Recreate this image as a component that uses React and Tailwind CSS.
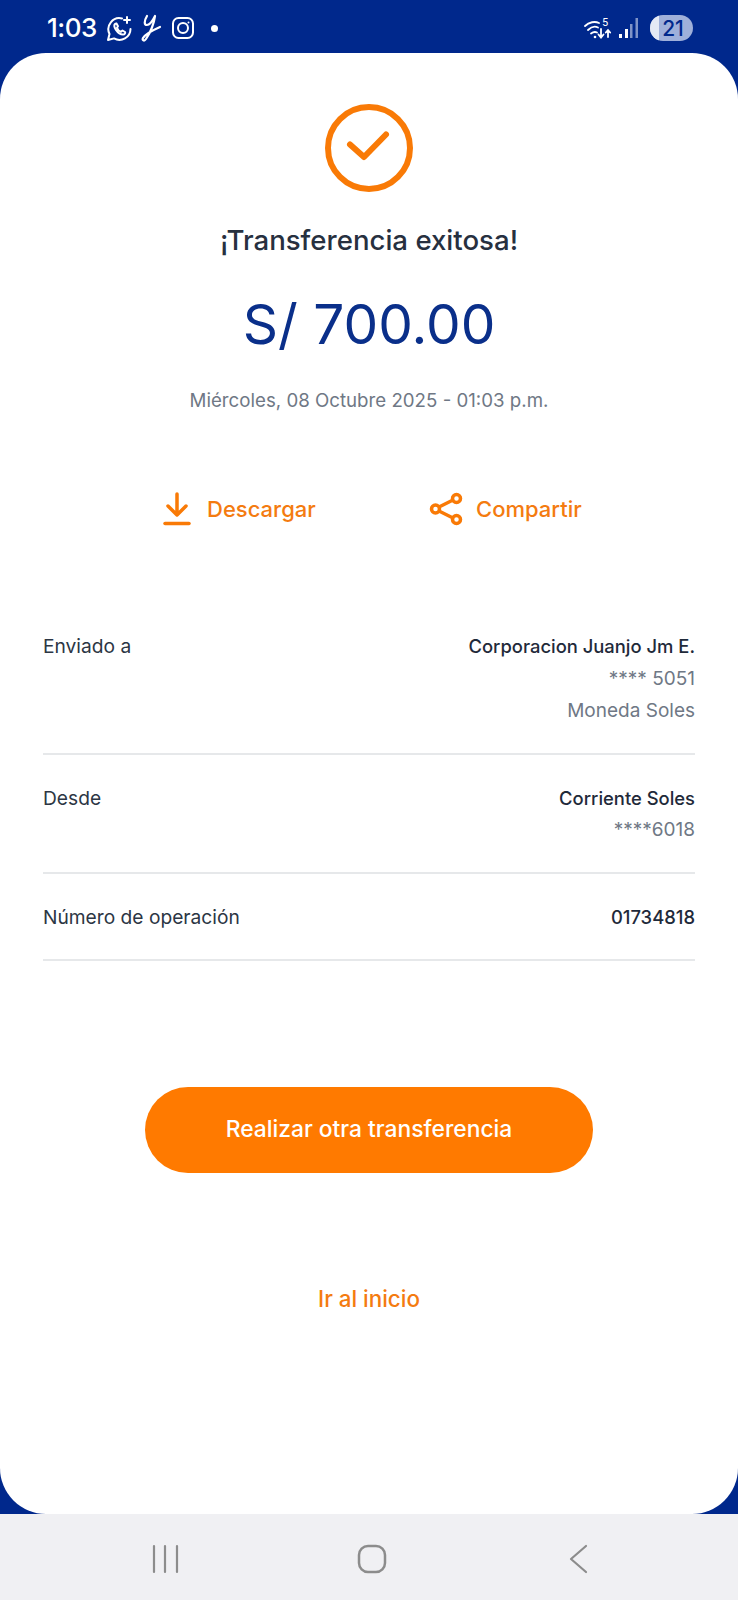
import React from 'react';

const Row = ({ label, title, lines }) => (
  <div className="flex justify-between border-b-2 border-[#e6e8ea] pt-[27px] pb-[25px] first:pt-0">
    <span className="text-[19.2px] leading-[32.6px] text-[#2c3644]">{label}</span>
    <div className="text-right">
      <div className="text-[18.4px] leading-[32.6px] font-medium text-[#1f2a3a]">{title}</div>
      {lines.map(l => (
        <div key={l} className="text-[19px] leading-[32.6px] text-[#6f7885]">{l}</div>
      ))}
    </div>
  </div>
);

const StatusBar = () => (
  <div className="h-[53px] flex items-center justify-between pl-[47px] pr-[45px] pt-[3px] text-white">
    <div className="flex items-center">
      <span className="text-[26px] leading-none font-medium tracking-[-0.5px]">1:03</span>
      <svg className="ml-[9px]" width="27" height="27" viewBox="0 0 27 27" fill="none" stroke="white" strokeWidth="2" strokeLinecap="round" strokeLinejoin="round">
        <path d="M16 3.5A11 11 0 0 0 3.5 19L2 25l6-1.6A11 11 0 0 0 24.5 14" />
        <path d="M9 9c-1 1-1 3 1 6s5 4.500 7 4.500 2.500-2 2-2.500l-2.500-1.500-1.500 1.200c-1.500-.5-3.500-2.500-4-4l1-1.500L10.500 8.500C10 8.300 9.500 8.500 9 9Z" />
        <path d="M21 2v6M18 5h6" />
      </svg>
      <svg className="ml-[7px]" width="22" height="30" viewBox="0 0 22 30" fill="none" stroke="white" strokeWidth="2.200" strokeLinecap="round" strokeLinejoin="round">
        <path d="M7 3C4 8 4 12 7 12 10 12 13 7 15 3 14 10 10 20 6 26 4 29 2 27 3 25 5 21 11 18 20 14" />
      </svg>
      <svg className="ml-[9px]" width="24" height="24" viewBox="0 0 24 24" fill="none" stroke="white" strokeWidth="2">
        <rect x="2" y="2" width="20" height="20" rx="5.500" />
        <circle cx="12" cy="12" r="5" />
        <circle cx="17.500" cy="6.500" r="1" fill="white" stroke="none" />
      </svg>
      <span className="ml-[16px] w-[7px] h-[7px] rounded-full bg-white" />
    </div>
    <div className="flex items-center">
      <svg width="30" height="26" viewBox="0 0 30 26" fill="none" stroke="white" strokeWidth="1.800" strokeLinecap="round">
        <path d="M2 11c4-4 10-5 14-3" />
        <path d="M5 15c3-3 7-4 10-2.500" />
        <path d="M8 18.500c2-1.500 4-2 6-1" />
        <circle cx="12" cy="22" r="1.300" fill="white" stroke="none" />
        <path d="M18 14v8M15.500 19.500l2.500 3 2.500-3" />
        <path d="M25 22v-7M22.800 17.500 25 15l2.200 2.500" />
        <text x="19" y="11" fontSize="11" fill="white" stroke="none" fontFamily="Roboto, sans-serif">5</text>
      </svg>
      <svg className="ml-[5px]" width="21" height="22" viewBox="0 0 21 22">
        <rect x="1" y="17" width="3" height="4" fill="white" />
        <rect x="7" y="12" width="3" height="9" fill="white" />
        <rect x="12" y="7" width="2.500" height="14" fill="#7f93c8" />
        <rect x="17.500" y="1" width="2.500" height="20" fill="#7f93c8" />
      </svg>
      <div className="relative ml-[11px] w-[43px] h-[26px] rounded-full bg-[#9fb0da] overflow-hidden flex items-center justify-center">
        <span className="absolute left-0 top-0 h-full w-[9px] bg-[#e4e9f5]" />
        <span className="relative ml-[3px] text-[21px] leading-none font-medium text-[#00288c]">21</span>
      </div>
    </div>
  </div>
);

export default function App() {
  return (
    <div className="w-[738px] h-[1600px] bg-[#00288c] flex flex-col font-['Inter',sans-serif]">
      <StatusBar />
      <div className="h-[1461px] bg-white rounded-[46px] flex flex-col items-center px-[43px] pt-[51px]">
        <svg width="88" height="88" viewBox="0 0 88 88" fill="none" stroke="#f97a06" strokeLinecap="round" strokeLinejoin="round">
          <circle cx="44" cy="44" r="41" strokeWidth="6" />
          <path d="M25 40.500 39 53 61 30.500" strokeWidth="6" />
        </svg>
        <h1 className="mt-[30px] text-[27.6px] leading-9 font-medium text-[#27303f]">¡Transferencia exitosa!</h1>
        <div className="mt-[32px] text-[55px] leading-[68px] text-[#0a2f8a]">S/ 700.00</div>
        <div className="mt-[27px] text-[18.7px] leading-8 text-[#6f7885]">Miércoles, 08 Octubre 2025 - 01:03 p.m.</div>

        <div className="mt-[75px] self-stretch flex pl-[120px] text-[#f47b10] text-[22px] leading-8 font-medium">
          <div className="flex items-center w-[266px]">
            <svg width="28" height="34" viewBox="0 0 28 34" fill="none" stroke="#f97a06" strokeWidth="3.500" strokeLinecap="round" strokeLinejoin="round">
              <path d="M14 2v21M5 14l9 9 9-9" />
              <path d="M2 31.500h24" />
            </svg>
            <span className="ml-[16px]">Descargar</span>
          </div>
          <div className="flex items-center">
            <svg width="34" height="34" viewBox="0 0 34 34" fill="none" stroke="#f97a06" strokeWidth="3.500">
              <circle cx="6.500" cy="17" r="4" />
              <circle cx="27.500" cy="6.500" r="4" />
              <circle cx="27.500" cy="27.500" r="4" />
              <path d="M10 15 24 8M10 19l14 7" />
            </svg>
            <span className="ml-[13px]">Compartir</span>
          </div>
        </div>

        <div className="mt-[104px] self-stretch flex flex-col">
          <Row label="Enviado a" title="Corporacion Juanjo Jm E." lines={['**** 5051', 'Moneda Soles']} />
          <Row label="Desde" title="Corriente Soles" lines={['****6018']} />
          <Row label="Número de operación" title="01734818" lines={[]} />
        </div>

        <button className="mt-[126px] w-[448px] h-[86px] rounded-full bg-[#ff7a00] text-white text-[22.800px] font-medium">Realizar otra transferencia</button>
        <button className="mt-[110px] text-[22.400px] leading-8 font-medium text-[#f47b10]">Ir al inicio</button>
      </div>
      <div className="flex-1 bg-[#f0f0f3] flex items-center pl-[150px] pt-[4px]">
        <svg width="30" height="30" viewBox="0 0 30 30" stroke="#8c8c8c" strokeWidth="2.200" strokeLinecap="round">
          <path d="M4 2v26M15 2v26M27 2v26" />
        </svg>
        <svg className="ml-[177px]" width="30" height="30" viewBox="0 0 30 30" fill="none" stroke="#8c8c8c" strokeWidth="2.500">
          <rect x="2" y="2" width="26" height="26" rx="9" />
        </svg>
        <svg className="ml-[181px]" width="22" height="30" viewBox="0 0 22 30" fill="none" stroke="#8c8c8c" strokeWidth="2.200" strokeLinecap="round" strokeLinejoin="round">
          <path d="M18 2 3 15l15 13" />
        </svg>
      </div>
    </div>
  );
}
